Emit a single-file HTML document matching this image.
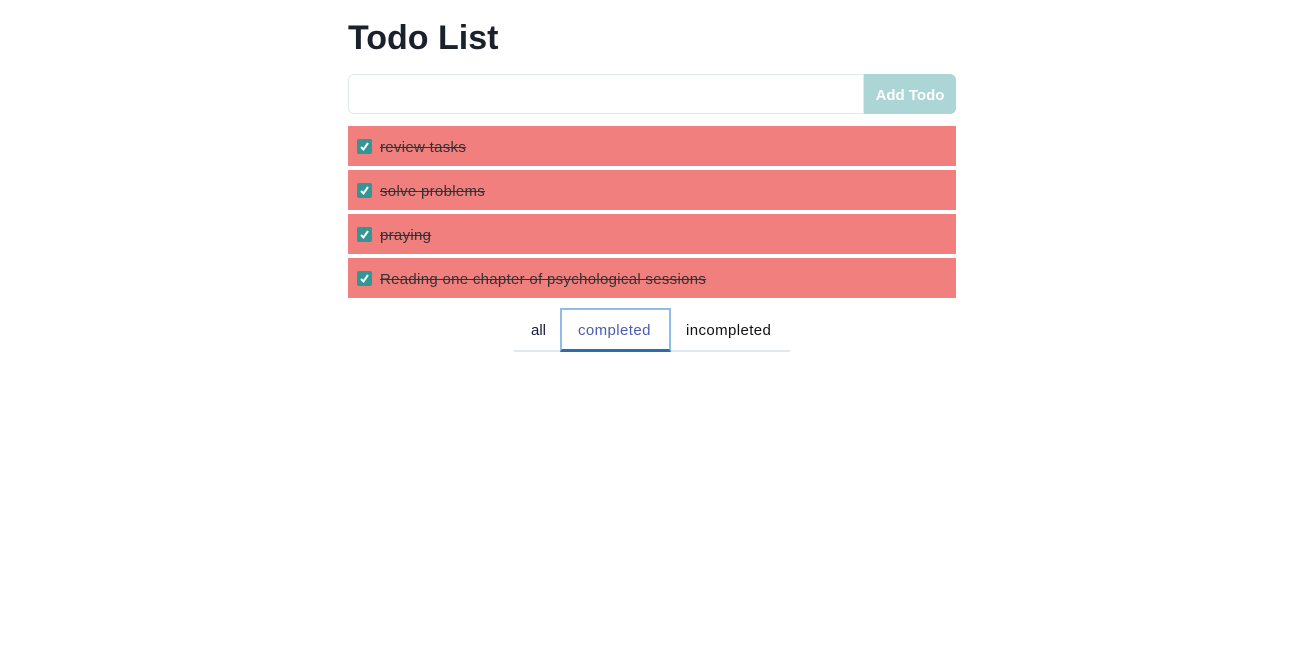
<!DOCTYPE html>
<html><head><style>
body{margin:0;background:#fff;font-family:"Liberation Sans",sans-serif;}
h1{position:absolute;left:348px;top:18px;margin:0;font-size:34px;font-weight:bold;color:#1a202c;line-height:40px;}
.inp{position:absolute;left:348px;top:74px;width:514px;height:38px;border:1px solid #e2e8f0;border-radius:6px 0 0 6px;}
.btn{position:absolute;left:864px;top:74px;width:92px;height:40px;background:#acd5d5;border-radius:0 6px 6px 0;color:#fff;font-weight:bold;font-size:15px;line-height:43px;text-align:center;}
.item{position:absolute;left:348px;width:608px;height:40px;background:#f07f7d;}
.cb{position:absolute;left:9px;top:13px;width:15px;height:15px;background:#319795;border-radius:2px;}
.item span{position:absolute;left:32px;top:13px;font-size:15px;letter-spacing:0.3px;color:#333;text-decoration:line-through;}
.tabs{position:absolute;left:514px;top:308px;width:276px;height:42px;border-bottom:2px solid #e2e8f0;font-size:15px;}
.t{position:absolute;top:14px;}
.sel{position:absolute;left:46px;top:0;width:111px;height:44px;border:2px solid #90bde8;border-bottom:3px solid #2b6cb0;box-sizing:border-box;}
</style></head><body>
<h1>Todo List</h1>
<div class="inp"></div><div class="btn">Add Todo</div>
<div class="item" style="top:126px"><div class="cb"><svg width="15" height="15"><path d="M4 8l2.5 2.5L11 4" stroke="#fff" stroke-width="2" fill="none"/></svg></div><span>review tasks</span></div>
<div class="item" style="top:170px"><div class="cb"><svg width="15" height="15"><path d="M4 8l2.5 2.5L11 4" stroke="#fff" stroke-width="2" fill="none"/></svg></div><span>solve problems</span></div>
<div class="item" style="top:214px"><div class="cb"><svg width="15" height="15"><path d="M4 8l2.5 2.5L11 4" stroke="#fff" stroke-width="2" fill="none"/></svg></div><span>praying</span></div>
<div class="item" style="top:258px"><div class="cb"><svg width="15" height="15"><path d="M4 8l2.5 2.5L11 4" stroke="#fff" stroke-width="2" fill="none"/></svg></div><span>Reading one chapter of psychological sessions</span></div>
<div class="tabs">
<div class="sel"></div>
<span class="t" style="left:17px;color:#1a1a40">all</span>
<span class="t" style="left:64px;color:#4a5bb0;letter-spacing:0.4px">completed</span>
<span class="t" style="left:172px;color:#111;letter-spacing:0.4px">incompleted</span>
</div>
</body></html>
